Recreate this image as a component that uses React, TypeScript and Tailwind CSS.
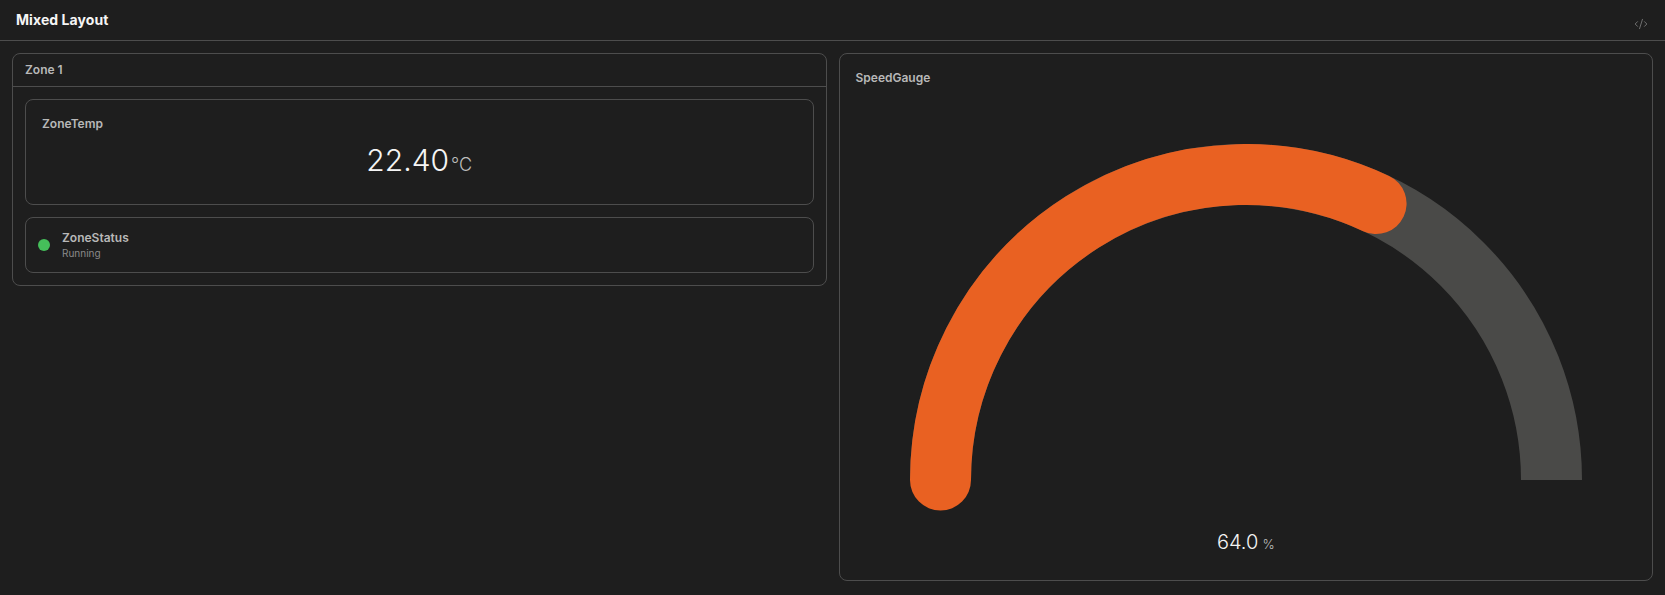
import { CodeXml } from "lucide-react";

const font = { fontFamily: "Inter, sans-serif" };

// value sits at 64% of the half circle
const cx = 336;
const cy = 336;
const r = 305.5;
const angle = Math.PI * (1 - 0.64);
const endX = cx + r * Math.cos(angle);
const endY = cy - r * Math.sin(angle);

function Gauge() {
  return (
    <svg viewBox="0 0 672 367" className="mx-auto mt-[58px] block h-[367px] w-[672px]">
      <path
        d={`M ${cx - r} ${cy} A ${r} ${r} 0 0 1 ${cx + r} ${cy}`}
        fill="none"
        stroke="#4a4a48"
        strokeWidth="61"
      />
      <path
        d={`M ${cx - r} ${cy} A ${r} ${r} 0 0 1 ${endX} ${endY}`}
        fill="none"
        stroke="#e96122"
        strokeWidth="61"
        strokeLinecap="round"
      />
    </svg>
  );
}

export default function App() {
  return (
    <div style={font} className="flex h-[595px] flex-col overflow-hidden bg-[#1e1e1e]">
      {/* top bar */}
      <div className="flex h-[41px] shrink-0 items-center justify-between border-b border-[#4d4d4d] pl-4 pr-[17px]">
        <h1 className="pb-[2px] text-[14px] font-bold tracking-[0.005em] text-[#f5f5f5]">Mixed Layout</h1>
        <CodeXml className="mt-[7px] h-[14px] w-[14px] text-[#7a7a7a]" strokeWidth={1.5} />
      </div>

      <div className="grid min-h-0 flex-1 grid-cols-2 items-start gap-3 pb-[14px] pl-3 pr-3 pt-3">
        {/* left column */}
        <div className="rounded-lg border border-[#4d4d4d]">
          <div className="flex h-[33px] items-center border-b border-[#4d4d4d] px-3 text-[12px] font-semibold text-[#b8b8b8]">
            Zone 1
          </div>
          <div className="flex flex-col gap-3 p-3">
            <div className="h-[106px] rounded-lg border border-[#4d4d4d] px-4 pt-[16px]">
              <div className="text-[12px] font-semibold leading-[16px] text-[#b8b8b8]">ZoneTemp</div>
              <div className="mt-[8px] flex items-baseline justify-center gap-[2px]">
                <span className="text-[30px] font-light leading-[40px] text-[#f5f5f5]">22.40</span>
                <span className="text-[18px] font-light text-[#bdbdbd]">°C</span>
              </div>
            </div>
            <div className="flex h-[56px] items-center gap-3 rounded-lg border border-[#4d4d4d] px-3">
              <span className="h-3 w-3 rounded-full bg-[#45bf5a]" />
              <div className="-mt-[1px]">
                <div className="text-[12px] font-semibold leading-[16px] text-[#b8b8b8]">ZoneStatus</div>
                <div className="text-[10px] leading-[14px] text-[#8a8a8a]">Running</div>
              </div>
            </div>
          </div>
        </div>

        {/* right column */}
        <div className="h-full rounded-lg border border-[#4d4d4d]">
          <div className="px-4 pt-[16px] text-[12px] font-semibold leading-[16px] text-[#b8b8b8]">SpeedGauge</div>
          <Gauge />
          <div className="mt-[17px] flex items-baseline justify-center gap-[4px]">
            <span className="text-[20px] font-light leading-[28px] text-[#f5f5f5]">64.0</span>
            <span className="text-[13px] font-light text-[#bdbdbd]">%</span>
          </div>
        </div>
      </div>
    </div>
  );
}
